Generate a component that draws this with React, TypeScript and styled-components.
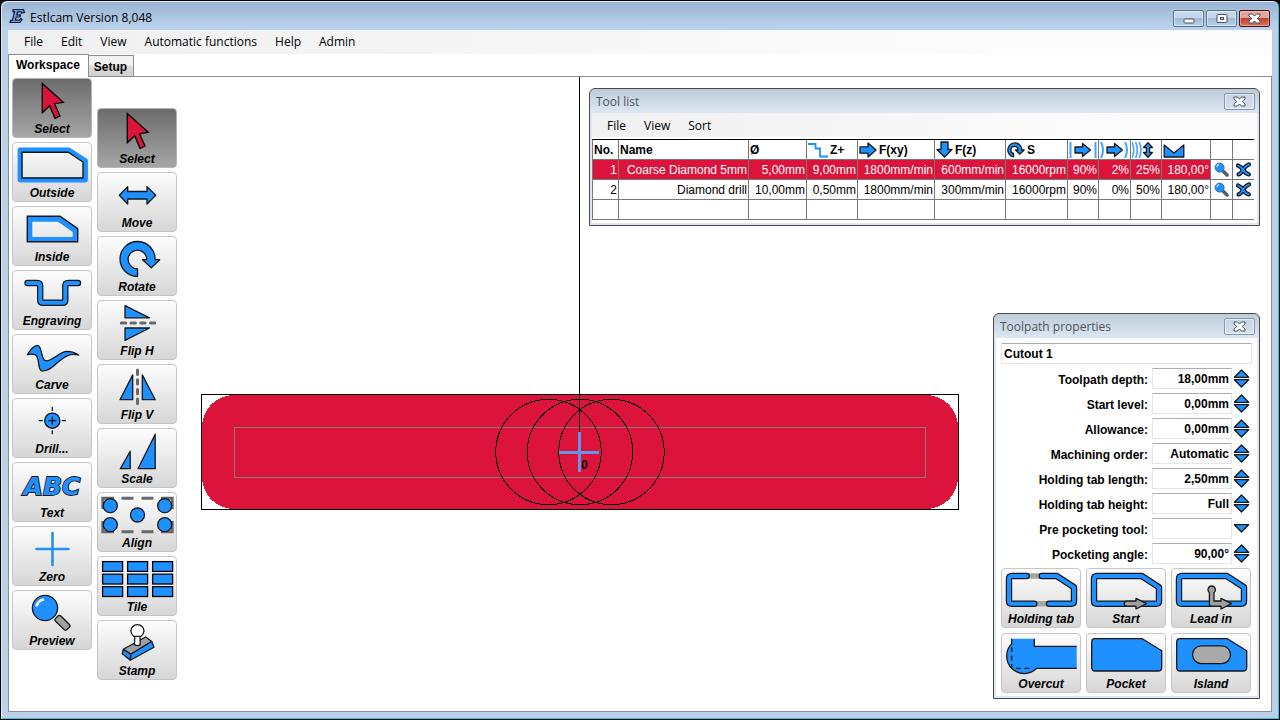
import React from "react";
import styled, { createGlobalStyle, css } from "styled-components";

const BLUE = "#1e90ff";
const RED = "#dc143c";
const INK = "#14181c";
const UI = `"Open Sans", "Noto Sans", sans-serif`;
const ARIAL = `"Liberation Sans", Arial, sans-serif`;

const GlobalStyle = createGlobalStyle`
  *, *::before, *::after { box-sizing: border-box; }
  html, body { margin: 0; padding: 0; background: #000; }
  body { font-family: ${ARIAL}; font-size: 12px; color: #000; }
  button, input, select { font: inherit; color: inherit; margin: 0; }
`;

/* ---------- window frame ---------- */

const Frame = styled.div`
  display: flex;
  flex-direction: column;
  min-height: 100vh;
  padding: 1px 7px 7px;
  border: 1px solid #000;
  border-radius: 7px 7px 0 0;
  background: linear-gradient(#98b3d2, #bcd3ec 28px, #b9d1ea 28px, #b9d1ea);
  box-shadow: inset 1px 1px 0 #dcebfa, inset -1px -1px 0 #28c8e0;
`;

const TitleBar = styled.header`
  display: flex;
  align-items: center;
  height: 28px;
  padding-left: 1px;
`;

const AppTitle = styled.h1`
  flex: 1;
  margin: 4px 0 0 4px;
  font: 400 12px/20px ${UI};
`;

const WindowButtons = styled.div`
  display: flex;
  gap: 2px;
  align-self: flex-start;
  padding: 8px 2px 0 0;
`;

const CaptionButton = styled.button<{ $tone?: "close" | "panel" }>`
  display: grid;
  place-items: center;
  width: 31px;
  height: 17px;
  padding: 0;
  border: 1px solid #5d7290;
  border-radius: 2px;
  background: linear-gradient(#c3d6ea 48%, #9fbad8 50%, #b8d2ec);
  box-shadow: inset 0 0 0 1px rgba(255, 255, 255, 0.5);
  ${(p) =>
    p.$tone === "close" &&
    css`
      border-color: #43131c;
      background: linear-gradient(#e5a79b 46%, #c0432b 50%, #d8735c);
      box-shadow: inset 0 0 0 1px rgba(255, 210, 200, 0.5);
    `}
  ${(p) =>
    p.$tone === "panel" &&
    css`
      border-color: #8795ab;
      background: linear-gradient(#c6d3e1, #d5e1ed);
    `}
`;

const MenuBar = styled.nav<{ $inset?: boolean }>`
  display: flex;
  height: 24px;
  padding: ${(p) => (p.$inset ? "2px 6px 0" : "0 7px")};
  background: linear-gradient(90deg, #f0f0f0, #fcfcfc 80%);
`;

const MenuItem = styled.button`
  padding: 0 9px;
  border: 0;
  background: none;
  font: 400 12px/22px ${UI};
`;

const Client = styled.div`
  flex: 1;
  display: flex;
  flex-direction: column;
  background: #fff;
`;

const TabStrip = styled.div`
  display: flex;
  align-items: flex-end;
  height: 22px;
`;

const Tab = styled.button<{ $active?: boolean }>`
  height: 21px;
  padding: 1px 6px 0 5px;
  border: 1px solid #8c8e94;
  border-width: 1px 1px 0 0;
  background: linear-gradient(#f2f2f2 45%, #dcdcdc 50%, #cfcfcf);
  font: 700 12px/18px ${ARIAL};
  ${(p) =>
    p.$active &&
    css`
      height: 23px;
      margin-bottom: -1px;
      padding: 0 8px 2px 7px;
      border-left-width: 1px;
      background: #fff;
      position: relative;
      z-index: 1;
    `}
`;

const Workspace = styled.main`
  position: relative;
  flex: 1;
  display: flex;
  align-items: flex-start;
  gap: 5px;
  padding: 1px 3px 30px;
  border: 1px solid #8c8e94;
`;

const Scene = styled.svg`
  position: absolute;
  inset: 0;
  width: 100%;
  height: 100%;
`;

const SceneText = styled.text`
  font: 700 12px ${ARIAL};
`;

/* ---------- tool buttons ---------- */

const ToolColumn = styled.div<{ $top?: number }>`
  position: relative;
  display: grid;
  gap: 4px;
  padding-top: ${(p) => p.$top ?? 0}px;
`;

const BigButton = styled.button<{ $on?: boolean }>`
  display: flex;
  flex-direction: column;
  align-items: center;
  width: 80px;
  height: 60px;
  padding: 0;
  border: 1px solid ${(p) => (p.$on ? "#b4b4b4" : "#c6c6c6")};
  border-radius: 4px;
  background: ${(p) => (p.$on ? "linear-gradient(#6c6c6c, #a6a6a6)" : "linear-gradient(#fdfdfd, #d6d6d6)")};
  font: italic 700 12px/16px ${ARIAL};
`;

const BigIcon = styled.svg`
  display: block;
  flex: none;
  width: 78px;
  height: 42px;
  overflow: visible;
`;

const GlyphText = styled.text`
  font: italic 700 25px "DejaVu Sans", sans-serif;
  text-anchor: middle;
  paint-order: stroke;
`;

/* ---------- floating windows ---------- */

const Floating = styled.section<{ $top: number; $width: number }>`
  position: absolute;
  top: ${(p) => p.$top}px;
  right: 11px;
  width: ${(p) => p.$width}px;
  padding: 0 2px 2px;
  border: 1px solid #4a4a4e;
  border-radius: 6px 6px 0 0;
  background: linear-gradient(#bfccd9, #dce7f3 24px, #dce7f3);
`;

const FloatingBar = styled.header`
  display: flex;
  align-items: center;
  justify-content: space-between;
  height: 24px;
  padding: 0 2px 0 4px;
`;

const FloatingTitle = styled.h2`
  margin: 2px 0 0;
  color: #4c5560;
  font: 400 12px/20px ${UI};
`;

const FloatingBody = styled.div<{ $pad?: boolean }>`
  background: #fff;
  ${(p) =>
    p.$pad &&
    css`
      display: grid;
      gap: 4px;
      padding: 5px 5px 3px;
    `}
`;

/* ---------- tool table ---------- */

const TableWrap = styled.div`
  padding: 2px 3px 3px 0;
`;

const Table = styled.table`
  width: 100%;
  table-layout: fixed;
  border-collapse: separate;
  border-spacing: 0;
  border-top: 1px solid #000;
  border-left: 1px solid #787878;
`;

const HeadCell = styled.th`
  height: 20px;
  padding: 0 1px;
  border: 1px solid #787878;
  border-width: 0 1px 1px 0;
  text-align: left;
  font: 700 12px/16px ${ARIAL};
  white-space: nowrap;
  &:last-child { border-right: 0; }
`;

const HeadInner = styled.span`
  display: flex;
  align-items: center;
  gap: 2px;
`;

const Cell = styled.td<{ $on?: boolean }>`
  height: 20px;
  padding: 0 1px;
  border: 1px solid #787878;
  border-width: 0 1px 1px 0;
  text-align: right;
  font: 400 12px/18px ${ARIAL};
  white-space: nowrap;
  ${(p) => p.$on && css`background: ${RED}; color: #fff;`}
  &:last-child { border-right: 0; }
`;

const CellButton = styled.button`
  display: grid;
  place-items: center;
  width: 100%;
  padding: 0;
  border: 0;
  background: none;
`;

const SmallIcon = styled.svg`
  display: block;
  flex: none;
`;

/* ---------- property form ---------- */

const fieldStyle = css`
  height: 21px;
  border: 1px solid #e2e5ee;
  border-top-color: #abadb3;
  border-radius: 1px;
  background: #fff;
  font: 700 12px/18px ${ARIAL};
`;

const NameInput = styled.input`
  ${fieldStyle}
  width: 100%;
  padding: 0 2px;
`;

const FieldRow = styled.div`
  display: grid;
  grid-template-columns: 1fr 80px 17px;
  align-items: center;
  column-gap: 1px;
  height: 21px;
  padding-right: 2px;
`;

const FieldLabel = styled.label`
  padding: 2px 3px 0 0;
  text-align: right;
  font: 700 12px/18px ${ARIAL};
`;

const ValueInput = styled.input`
  ${fieldStyle}
  width: 100%;
  padding: 0 2px;
  text-align: right;
`;

const ValueSelect = styled.select`
  ${fieldStyle}
  width: 100%;
  padding: 0 2px;
  appearance: none;
`;

const Spinner = styled.div`
  display: grid;
  gap: 1px;
`;

const SpinButton = styled.button`
  display: block;
  height: 9px;
  padding: 0;
  border: 0;
  background: none;
`;

const ButtonGrid = styled.div`
  display: grid;
  grid-template-columns: repeat(3, 80px);
  gap: 5px;
`;

/* ---------- drawings ---------- */

const line = { stroke: INK, strokeWidth: 1.3, strokeLinejoin: "round" as const };
const solid = { fill: BLUE, ...line };

function Pipe({ d, width = 4, color = BLUE }: { d: string; width?: number; color?: string }) {
  const common = { d, fill: "none", strokeLinecap: "round" as const, strokeLinejoin: "round" as const };
  return (
    <>
      <path {...common} stroke={INK} strokeWidth={width + 2.4} />
      <path {...common} stroke={color} strokeWidth={width} />
    </>
  );
}

const cursor = (
  <path d="M30.3 5.5L51.3 24.3L42.5 25.7L48 38L43 40.3L37.7 27.7L30.3 34.7Z" fill={RED} stroke="#000" strokeWidth="1.3" />
);
const contour = "M11 8H55.7L73 19.3V33Q73 35.7 70 35.7H11Q8 35.7 8 33V11Q8 8 11 8Z";
const plate = "M9 5.7H56.3L75.7 17.7V34.5Q75.7 38 72 38H9Q5.7 38 5.7 34.5V9Q5.7 5.7 9 5.7Z";

const icons: Record<string, React.ReactNode> = {
  Select: cursor,
  Outside: (
    <>
      <path d="M8 8H57L73.5 18.7V38H8Z" fill="none" stroke={BLUE} strokeWidth="4.8" strokeLinejoin="round" />
      <path d="M10 10.2H56.3L71 20V36H10Z" fill="none" stroke={INK} strokeWidth="1.4" />
    </>
  ),
  Inside: (
    <>
      <path d="M15.3 10.3H48L65.7 22.7V35.7H15.3Z M20.3 15.7V31H60.7V26L46 15.7Z" fill={BLUE} fillRule="evenodd" />
      <path d="M15.3 10.3H48L65.7 22.7V35.7H15.3Z" fill="none" stroke={INK} strokeWidth="1.4" />
    </>
  ),
  Engraving: <Pipe d="M15.5 13H25Q28.2 13 28.2 16V30Q28.2 32.8 31 32.8H50.5Q53.3 32.8 53.3 30V16Q53.3 13 56.5 13H66" />,
  Carve: (
    <path
      d="M15.3 20.7C18 16 22 11.5 25.7 11.3C30.5 12 28.5 25.5 33.5 26.7C40 28 47 17.5 55 17.3C60 17.3 64 19 66.7 21C58 18.5 52 23 45 29C39 35 33 37.5 29.3 36.7C25 34 28 22 23 20.7C20 19.8 17.5 20.2 15.3 20.7Z"
      {...solid}
    />
  ),
  "Drill...": (
    <>
      <path d="M26.7 22.7H54.3M40.3 9V37" stroke={INK} strokeWidth="1.3" strokeDasharray="4 1.8" />
      <circle cx="40.3" cy="22.7" r="7.6" {...solid} />
      <path d="M36.3 22.7H44.3M40.3 18.7V26.7" stroke={INK} strokeWidth="1.3" />
    </>
  ),
  Text: (
    <GlyphText x="40" y="33" fill={BLUE} stroke={INK} strokeWidth="1.8">
      ABC
    </GlyphText>
  ),
  Zero: <path d="M24.5 23H56.5M40.5 7V39" stroke={BLUE} strokeWidth="2.6" strokeLinecap="round" />,
  Preview: (
    <>
      <circle cx="33" cy="18" r="12.6" {...solid} />
      <path d="M24.8 15.2Q26.5 10.8 30.8 9.8" fill="none" stroke="#fff" strokeWidth="2.6" strokeLinecap="round" />
      <rect x="-8" y="-3.7" width="16" height="7.4" rx="2" transform="translate(50.5 32.8) rotate(45)" fill="#a0a0a0" stroke={INK} strokeWidth="1.3" />
    </>
  ),
  Move: <path d="M22.3 23.3L30.7 14.6V19.5H50V14.6L58.7 23.3L50 32V27H30.7V32Z" {...solid} />,
  Rotate: <path d="M40.5 40.5A17.5 17.5 0 1 1 58 23.7H62.7L54.3 31.7L45.6 23.7H49.7A9.3 9.3 0 1 0 40.5 32.8Z" {...solid} />,
  "Flip H": (
    <>
      <path d="M28 5.7L52.5 17.8H28ZM28 40.3V28H52.5Z" {...solid} />
      <path d="M24.3 23H58" stroke="#696969" strokeWidth="3" strokeLinecap="round" strokeDasharray="4.4 5.3" />
    </>
  ),
  "Flip V": (
    <>
      <path d="M35.7 10.9V35.7H23ZM45.3 10.9V35.7H58.2Z" {...solid} />
      <path d="M40.5 6V40" stroke="#696969" strokeWidth="3" strokeLinecap="round" strokeDasharray="4.4 5.3" />
    </>
  ),
  Scale: <path d="M33.2 23.3V40.7H23.3ZM58.2 6.3V40.7H41Z" {...solid} />,
  Align: (
    <>
      <path
        d="M5.8 17V6.3H17M24.5 6.3H36.5M44.5 6.3H56.5M64 6.3H75.2V17M75.2 29V39.8H64M56.5 39.8H44.5M36.5 39.8H24.5M17 39.8H5.8V29"
        fill="none"
        stroke="#696969"
        strokeWidth="3"
      />
      {[[13.3, 13.7], [67.7, 13.7], [40.5, 23], [13.3, 32.7], [67.7, 32.7]].map(([x, y]) => (
        <circle key={`${x}-${y}`} cx={x} cy={y} r="7" {...solid} />
      ))}
    </>
  ),
  Tile: (
    <>
      {[5.6, 30.6, 55.6].map((x) =>
        [5.6, 18.2, 30.7].map((y) => <rect key={`${x}-${y}`} x={x} y={y} width="20" height="9.8" fill={BLUE} stroke="#000" strokeWidth="1.3" />),
      )}
    </>
  ),
  Stamp: (
    <>
      <path d="M26.3 29.3L48.7 17L54.7 21.5L33.7 34.3Z" fill="#a0a0a0" {...line} />
      <path d="M26.3 29.3L33.7 34.3L33.3 40.3L25.3 33.7ZM33.7 34.3L54.7 21.5L57 27.3L33.3 40.3Z" {...solid} />
      <path d="M37.8 15.5L37.5 24.6Q40.3 26.6 43.2 24.6L43 15.5Z" fill="#fff" {...line} />
      <path d="M40.4 4.6A6.6 6.6 0 0 1 47 11Q46.8 14 43.8 16.4H37Q34 14 33.8 11A6.6 6.6 0 0 1 40.4 4.6Z" fill="#fff" {...line} />
    </>
  ),
  "Holding tab": (
    <>
      <path d="M27 8H39M35 35.7H47" stroke="#a6a6a6" strokeWidth="5.4" />
      <Pipe d="M25.7 8H11Q8 8 8 11V33Q8 35.7 11 35.7H33.3" />
      <Pipe d="M40.7 8H55.7L73 19.3V33Q73 35.7 70 35.7H48" />
    </>
  ),
  Start: (
    <>
      <Pipe d={contour} />
      <path d="M40.5 33.2H50V30.3L60.5 35.7L50 41V38.2H40.5Q38.3 38 38.3 35.7Q38.3 33.4 40.5 33.2Z" fill="#a0a0a0" {...line} />
    </>
  ),
  "Lead in": (
    <>
      <Pipe d={contour} />
      <path d="M38.4 24.6A3.7 3.7 0 1 1 43 24.6V33.2H50V30.3L60.5 35.7L50 41V38.2H40.5Q38.4 38 38.4 36Z" fill="#a0a0a0" {...line} />
    </>
  ),
  Overcut: (
    <>
      <path d="M10.7 5.7H33.3V13.3H75.7V35.3H35.7A17.5 17.5 0 0 1 10.7 10.8Z" fill={BLUE} />
      <path d="M10.7 5.7V10.8A17.5 17.5 0 0 0 35.7 35.3H75.7M33.3 5.7V13.3H75.7" fill="none" {...line} />
      <path d="M10.7 14V35.3H31" fill="none" stroke={INK} strokeWidth="1.3" strokeDasharray="5 3.5" />
    </>
  ),
  Pocket: <path d={plate} {...solid} />,
  Island: (
    <>
      <path d={plate} {...solid} />
      <rect x="21.5" y="12.8" width="38" height="17.8" rx="8.9" fill="#a9a9a9" {...line} />
    </>
  ),
};

function ToolButton({ name, on }: { name: string; on?: boolean }) {
  return (
    <BigButton type="button" $on={on}>
      <BigIcon viewBox="1 1 78 42" aria-hidden="true">{icons[name]}</BigIcon>
      {name}
    </BigButton>
  );
}

function Logo() {
  return (
    <SmallIcon width="17" height="16" viewBox="0 0 17 16" aria-hidden="true">
      <path
        d="M4 1.5H14.5L15.5 4.5L12.5 5V3.8H8.5L7.8 6.8H11.5L11 9H7.2L6.4 12.2H10.5L12 10.5L13 11.5L11 14.5H1L1.8 12.4H3.4L5.6 3.6H4Z"
        fill="#6f9fe8"
        stroke="#101a38"
        strokeWidth="1.2"
      />
    </SmallIcon>
  );
}

function CrossGlyph() {
  return (
    <SmallIcon width="13" height="11" viewBox="0 0 13 11" aria-hidden="true">
      <path d="M1 1H4.6L6.5 3L8.4 1H12V3L9.2 5.5L12 8V10H8.4L6.5 8L4.6 10H1V8L3.8 5.5L1 3Z" fill="#fff" stroke="#4a5066" strokeLinejoin="round" />
    </SmallIcon>
  );
}

const headIcons: Record<string, React.ReactNode> = {
  step: (
    <SmallIcon width="20" height="16" viewBox="0 0 20 16">
      <path d="M0 2H7.5V6.5H12V14.5H20" fill="none" stroke={BLUE} strokeWidth="1.8" />
    </SmallIcon>
  ),
  right: (
    <SmallIcon width="18" height="16" viewBox="0 0 18 16">
      <path d="M1 4.8H9V1L17 8L9 15V11.2H1Z" {...solid} />
    </SmallIcon>
  ),
  down: (
    <SmallIcon width="17" height="17" viewBox="0 0 17 17">
      <path d="M5 1H12V8.5H16L8.5 16L1 8.5H5Z" {...solid} />
    </SmallIcon>
  ),
  spin: (
    <SmallIcon width="18" height="16" viewBox="0 0 18 16">
      <path d="M6.5 14.8A7 7 0 1 1 14.8 8H17.2L12.8 12L8.4 8H11A3.6 3.6 0 1 0 6.5 11.4Z" {...solid} />
    </SmallIcon>
  ),
  bars: (
    <SmallIcon width="28" height="16" viewBox="0 0 28 16">
      <path d="M1.5 0V16M26.5 0V16" stroke="#45a3ff" strokeWidth="2" />
      <path d="M6 5H13.5V1.5L21.5 8L13.5 14.5V11H6Z" {...solid} />
    </SmallIcon>
  ),
  arcs: (
    <SmallIcon width="29" height="16" viewBox="0 0 29 16">
      <path d="M1 0Q5 8 1 16M25 0Q29 8 25 16" fill="none" stroke="#45a3ff" strokeWidth="2" />
      <path d="M7 5H14.5V1.5L22.5 8L14.5 14.5V11H7Z" {...solid} />
    </SmallIcon>
  ),
  waves: (
    <SmallIcon width="22" height="16" viewBox="0 0 22 16">
      <path d="M0 0Q3.5 8 0 16M3.6 0Q7 8 3.6 16M7.2 0Q10.6 8 7.2 16" fill="none" stroke="#45a3ff" strokeWidth="1.6" />
      <path d="M16 .8L20.4 5.5H17.6V10.5H20.4L16 15.2L11.6 10.5H14.4V5.5H11.6Z" {...solid} />
    </SmallIcon>
  ),
  notch: (
    <SmallIcon width="22" height="16" viewBox="0 0 22 16">
      <path d="M1.2 3L11 11L20.8 3V15H1.2Z" {...solid} />
    </SmallIcon>
  ),
};

function Lens() {
  return (
    <SmallIcon width="15" height="15" viewBox="0 0 15 15" aria-hidden="true">
      <path d="M9 9L13 13" stroke="#56606a" strokeWidth="3.6" strokeLinecap="round" />
      <circle cx="5.6" cy="5.6" r="4.5" fill={BLUE} stroke="#3a6ea8" strokeWidth="1" />
      <path d="M2.8 5Q3.4 3 5 2.7" fill="none" stroke="#cfe6ff" strokeWidth="1.2" />
    </SmallIcon>
  );
}

function Remove() {
  return (
    <SmallIcon width="15" height="15" viewBox="0 0 15 15" aria-hidden="true">
      <Pipe d="M2 3.5Q5.5 5 7.2 8Q9.5 11.6 12.8 12.4M13 2.4Q8.5 4.5 6.5 8.5Q5 11.8 2.6 12.4" width={1.8} />
    </SmallIcon>
  );
}

function Triangle({ up }: { up?: boolean }) {
  return (
    <SmallIcon width="17" height="9" viewBox="0 0 17 9" aria-hidden="true">
      <path d={up ? "M1.4 8.3L8.5 1L15.6 8.3Z" : "M1.4 .7L8.5 8L15.6 .7Z"} {...solid} />
    </SmallIcon>
  );
}

/* ---------- data ---------- */

const leftTools = ["Select", "Outside", "Inside", "Engraving", "Carve", "Drill...", "Text", "Zero", "Preview"];
const editTools = ["Select", "Move", "Rotate", "Flip H", "Flip V", "Scale", "Align", "Tile", "Stamp"];
const pathTools = ["Holding tab", "Start", "Lead in", "Overcut", "Pocket", "Island"];

const columns: { width: number; label?: string; icon?: string }[] = [
  { width: 26, label: "No." },
  { width: 130, label: "Name" },
  { width: 58, label: "Ø" },
  { width: 51, label: "Z+", icon: "step" },
  { width: 77, label: "F(xy)", icon: "right" },
  { width: 71, label: "F(z)", icon: "down" },
  { width: 62, label: "S", icon: "spin" },
  { width: 31, icon: "bars" },
  { width: 32, icon: "arcs" },
  { width: 31, icon: "waves" },
  { width: 49, icon: "notch" },
  { width: 22 },
  { width: 21 },
];

const tools = [
  ["1", "Coarse Diamond 5mm", "5,00mm", "9,00mm", "1800mm/min", "600mm/min", "16000rpm", "90%", "2%", "25%", "180,00°"],
  ["2", "Diamond drill", "10,00mm", "0,50mm", "1800mm/min", "300mm/min", "16000rpm", "90%", "0%", "50%", "180,00°"],
];

const fields = [
  { id: "depth", label: "Toolpath depth:", value: "18,00mm" },
  { id: "start", label: "Start level:", value: "0,00mm" },
  { id: "allowance", label: "Allowance:", value: "0,00mm" },
  { id: "order", label: "Machining order:", value: "Automatic" },
  { id: "tab-length", label: "Holding tab length:", value: "2,50mm" },
  { id: "tab-height", label: "Holding tab height:", value: "Full" },
  { id: "pre-tool", label: "Pre pocketing tool:", value: null },
  { id: "angle", label: "Pocketing angle:", value: "90,00°" },
];

/* ---------- parts ---------- */

function Drawing() {
  return (
    <Scene aria-hidden="true">
      <g shapeRendering="crispEdges">
        <rect x="192.5" y="317.5" width="757" height="115" fill="#fff" />
        <rect x="193" y="318" width="756" height="114" rx="32" fill={RED} />
        <rect x="192.5" y="317.5" width="757" height="115" fill="none" stroke="#000" />
        <rect x="225.5" y="350.5" width="691" height="50" fill="none" stroke="#8c7a7a" />
        {[539.5, 571, 602.5].map((cx) => (
          <circle key={cx} cx={cx} cy="375" r="52.7" fill="none" stroke="#000" />
        ))}
        <path d="M570.5 0V356" stroke="#000" />
        <path d="M570.5 355V395M550 375.5H590" stroke="#6495ed" strokeWidth="3" />
      </g>
      <SceneText x="572" y="392">0</SceneText>
    </Scene>
  );
}

function ToolList() {
  return (
    <Floating $top={11} $width={671} aria-label="Tool list">
      <FloatingBar>
        <FloatingTitle>Tool list</FloatingTitle>
        <CaptionButton type="button" $tone="panel" aria-label="Close tool list"><CrossGlyph /></CaptionButton>
      </FloatingBar>
      <FloatingBody>
        <MenuBar $inset>
          {["File", "View", "Sort"].map((m) => <MenuItem key={m} type="button">{m}</MenuItem>)}
        </MenuBar>
        <TableWrap>
          <Table>
            <colgroup>{columns.map((c, i) => <col key={i} width={c.width} />)}</colgroup>
            <thead>
              <tr>
                {columns.map((c, i) => (
                  <HeadCell key={i}>
                    <HeadInner>{c.icon && headIcons[c.icon]}{c.label}</HeadInner>
                  </HeadCell>
                ))}
              </tr>
            </thead>
            <tbody>
              {tools.map((row, r) => (
                <tr key={row[0]}>
                  {row.map((v, i) => <Cell key={i} $on={r === 0}>{v}</Cell>)}
                  <Cell><CellButton type="button" aria-label="Show tool"><Lens /></CellButton></Cell>
                  <Cell><CellButton type="button" aria-label="Delete tool"><Remove /></CellButton></Cell>
                </tr>
              ))}
              <tr>{columns.map((_, i) => <Cell key={i} />)}</tr>
            </tbody>
          </Table>
        </TableWrap>
      </FloatingBody>
    </Floating>
  );
}

function Properties() {
  return (
    <Floating $top={236} $width={267} aria-label="Toolpath properties">
      <FloatingBar>
        <FloatingTitle>Toolpath properties</FloatingTitle>
        <CaptionButton type="button" $tone="panel" aria-label="Close properties"><CrossGlyph /></CaptionButton>
      </FloatingBar>
      <FloatingBody $pad>
        <NameInput aria-label="Toolpath name" defaultValue="Cutout 1" />
        {fields.map((f) => (
          <FieldRow key={f.id}>
            <FieldLabel htmlFor={f.id}>{f.label}</FieldLabel>
            {f.value === null ? (
              <>
                <ValueSelect id={f.id}><option value="" /></ValueSelect>
                <Triangle />
              </>
            ) : (
              <>
                <ValueInput id={f.id} defaultValue={f.value} />
                <Spinner>
                  <SpinButton type="button" aria-label={`Increase ${f.label}`}><Triangle up /></SpinButton>
                  <SpinButton type="button" aria-label={`Decrease ${f.label}`}><Triangle /></SpinButton>
                </Spinner>
              </>
            )}
          </FieldRow>
        ))}
        <ButtonGrid>
          {pathTools.map((name) => <ToolButton key={name} name={name} />)}
        </ButtonGrid>
      </FloatingBody>
    </Floating>
  );
}

export default function App() {
  return (
    <>
      <GlobalStyle />
      <Frame>
        <TitleBar>
          <Logo />
          <AppTitle>Estlcam Version 8,048</AppTitle>
          <WindowButtons>
            <CaptionButton type="button" aria-label="Minimize">
              <SmallIcon width="12" height="11" viewBox="0 0 12 11"><rect x="1" y="6" width="10" height="4" rx="1" fill="#fff" stroke="#4a5066" /></SmallIcon>
            </CaptionButton>
            <CaptionButton type="button" aria-label="Maximize">
              <SmallIcon width="12" height="11" viewBox="0 0 12 11">
                <rect x="1" y="1.5" width="10" height="8" rx="1" fill="#fff" stroke="#4a5066" />
                <rect x="4.5" y="4.5" width="3" height="2" fill="#b8d2ec" stroke="#4a5066" />
              </SmallIcon>
            </CaptionButton>
            <CaptionButton type="button" $tone="close" aria-label="Close"><CrossGlyph /></CaptionButton>
          </WindowButtons>
        </TitleBar>
        <Client>
          <MenuBar>
            {["File", "Edit", "View", "Automatic functions", "Help", "Admin"].map((m) => <MenuItem key={m} type="button">{m}</MenuItem>)}
          </MenuBar>
          <TabStrip>
            <Tab type="button" $active>Workspace</Tab>
            <Tab type="button">Setup</Tab>
          </TabStrip>
          <Workspace>
            <Drawing />
            <ToolColumn>
              {leftTools.map((name, i) => <ToolButton key={name} name={name} on={i === 0} />)}
            </ToolColumn>
            <ToolColumn $top={30}>
              {editTools.map((name, i) => <ToolButton key={name} name={name} on={i === 0} />)}
            </ToolColumn>
            <ToolList />
            <Properties />
          </Workspace>
        </Client>
      </Frame>
    </>
  );
}
